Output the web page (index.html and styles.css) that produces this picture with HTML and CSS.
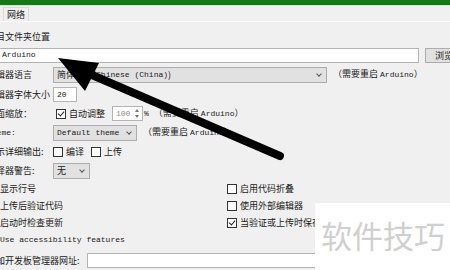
FILE: index.html
```html
<html lang="zh-CN">
    <head>
        <meta charset="UTF-8">
        <title>首选项</title>
        <link rel="stylesheet" href="styles.css">
    </head>
    <body>
        <div class="titlebar"></div>
        <div class="tabs">
            <div class="tab">网络</div>
        </div>
        <div class="panel">
            <div class="row row-m">
                <span class="label">项目文件夹位置</span>
            </div>
            <div class="row row-m">
                <div class="field path"><span class="en">Arduino</span></div>
                <div class="button">浏览</div>
            </div>
            <div class="row row-lang">
                <span class="label">编辑器语言</span>
                <div class="select lang">简体中文(<span class="en">Chinese (China)</span>)<i class="caret"></i></div>
                <span class="note">（需要重启 <span class="en">Arduino</span>）</span>
            </div>
            <div class="row">
                <span class="label">编辑器字体大小</span>
                <div class="field size"><span class="en">20</span></div>
            </div>
            <div class="row">
                <span class="label">界面缩放：</span>
                <span class="check checked zoom-check"></span>
                <span class="text">自动调整</span>
                <div class="field spin"><span class="en">100</span><i class="spin-arrows"></i></div>
                <span class="en pct">%</span>
                <span class="note">（需要重启 <span class="en">Arduino</span>）</span>
            </div>
            <div class="row">
                <span class="label"><span class="en">Theme:</span></span>
                <div class="select theme"><span class="en">Default theme</span><i class="caret"></i></div>
                <span class="note">（需要重启 <span class="en">Arduino</span>）</span>
            </div>
            <div class="row">
                <span class="label">显示详细输出:</span>
                <span class="check"></span>
                <span class="text">编译</span>
                <span class="check second"></span>
                <span class="text">上传</span>
            </div>
            <div class="row">
                <span class="label">编译器警告:</span>
                <div class="select warn">无<i class="caret"></i></div>
            </div>
            <div class="options">
                <div class="row row-s"><span class="check checked"></span><span class="text">显示行号</span></div>
                <div class="row row-s"><span class="check"></span><span class="text">启用代码折叠</span></div>
                <div class="row row-s"><span class="check checked"></span><span class="text">上传后验证代码</span></div>
                <div class="row row-s"><span class="check"></span><span class="text">使用外部编辑器</span></div>
                <div class="row row-s"><span class="check checked"></span><span class="text">启动时检查更新</span></div>
                <div class="row row-s"><span class="check checked"></span><span class="text">当验证或上传时保存</span></div>
                <div class="row row-m"><span class="check"></span><span class="text"><span class="en">Use accessibility features</span></span></div>
            </div>
            <div class="row row-url">
                <span class="label url-label">附加开发板管理器网址:</span>
                <div class="field url"></div>
            </div>
        </div>

        <div class="watermark">软件技巧</div>
        <svg class="arrow" width="450" height="270" viewBox="0 0 450 270">
            <polygon points="58,58 99,63 85,91" fill="#000"/>
            <line x1="85" y1="72" x2="280" y2="156" stroke="#000" stroke-width="8" stroke-linecap="round"/>
        </svg>
    </body>
</html>
```

FILE: styles.css
```css
body{
    margin: 0;
    width: 450px;
    height: 270px;
    overflow: hidden;
    background: #f0f0f0;
    color: #1a1a1a;
    font-family: "Noto Sans CJK SC", sans-serif;
    font-size: 9px;
    line-height: 12px;
}
.en{
    font-family: "Liberation Mono", monospace;
    font-size: 8px;
}
.titlebar{
    height: 5px;
    background: #157a15;
    border-bottom: 1px solid #cfe6cf;
}
.tabs{
    height: 15px;
    padding-left: 3px;
    border-bottom: 1px solid #fdfdfd;
    display: flex;
    align-items: flex-end;
}
.tab{
    height: 13px;
    padding: 0 3px;
    border: 1px solid #dadada;
    border-bottom: none;
    line-height: 13px;
}
.panel{
    margin-left: -13px;
    padding-top: 6px;
}
.row{
    display: flex;
    align-items: center;
    height: 19px;
    white-space: nowrap;
}
.row-m{ height: 18px; }
.row-s{ height: 17px; }
.row-lang{ height: 21px; }
.row-url{
    margin-top: 2px;
}
.label{
    width: 66px;
    flex: none;
}
.url-label{
    width: 95px;
}
.field{
    box-sizing: border-box;
    flex: none;
    height: 15px;
    background: #fff;
    border: 1px solid #b4b4b4;
    display: flex;
    align-items: center;
    padding-left: 3px;
}
.path{
    width: 432px;
    padding-left: 14px;
}
.button{
    box-sizing: border-box;
    flex: none;
    margin-left: 6px;
    width: 40px;
    height: 15px;
    background: #e1e1e1;
    border: 1px solid #adadad;
    padding-left: 9px;
    line-height: 13px;
}
.select{
    box-sizing: border-box;
    flex: none;
    height: 16px;
    background: #e1e1e1;
    border: 1px solid #adadad;
    display: flex;
    align-items: center;
    padding-left: 3px;
    position: relative;
}
.lang{ width: 274px; }
.theme{ width: 84px; }
.warn{ width: 37px; }
.caret{
    position: absolute;
    right: 5px;
    top: 4px;
    width: 3px;
    height: 3px;
    border-right: 1px solid #555;
    border-bottom: 1px solid #555;
    transform: rotate(45deg);
}
.note{
    margin-left: 6px;
}
.size{ width: 24px; }
.check{
    box-sizing: border-box;
    width: 10px;
    height: 10px;
    flex: none;
    background: #fff;
    border: 1px solid #333;
    position: relative;
}
.check.checked:after{
    content: "";
    position: absolute;
    left: 2px;
    top: 0px;
    width: 3px;
    height: 5px;
    border-right: 1px solid #222;
    border-bottom: 1px solid #222;
    transform: rotate(40deg);
}
.zoom-check{ margin-left: 3px; }
.text{ margin-left: 3px; }
.second{ margin-left: 7px; }
.spin{
    width: 31px;
    margin-left: 7px;
    color: #8a8a8a;
    position: relative;
}
.spin-arrows:before,
.spin-arrows:after{
    content: "";
    position: absolute;
    right: 3px;
    border-left: 2px solid transparent;
    border-right: 2px solid transparent;
}
.spin-arrows:before{
    top: 2px;
    border-bottom: 3px solid #777;
}
.spin-arrows:after{
    bottom: 2px;
    border-top: 3px solid #777;
}
.pct{ margin-left: 1px; }
.pct + .note{ margin-left: 5px; }
.options{
    display: grid;
    grid-template-columns: 240px auto;
}
.url{
    margin-left: 5px;
    flex: 1;
}
.watermark{
    position: absolute;
    left: 315px;
    top: 203px;
    width: 135px;
    height: 67px;
    box-sizing: border-box;
    background: #fff;
    color: #d0d0d0;
    font-size: 31px;
    line-height: 31px;
    padding: 16px 0 0 6px;
}
.arrow{
    position: absolute;
    left: 0;
    top: 0;
    pointer-events: none;
}
```
